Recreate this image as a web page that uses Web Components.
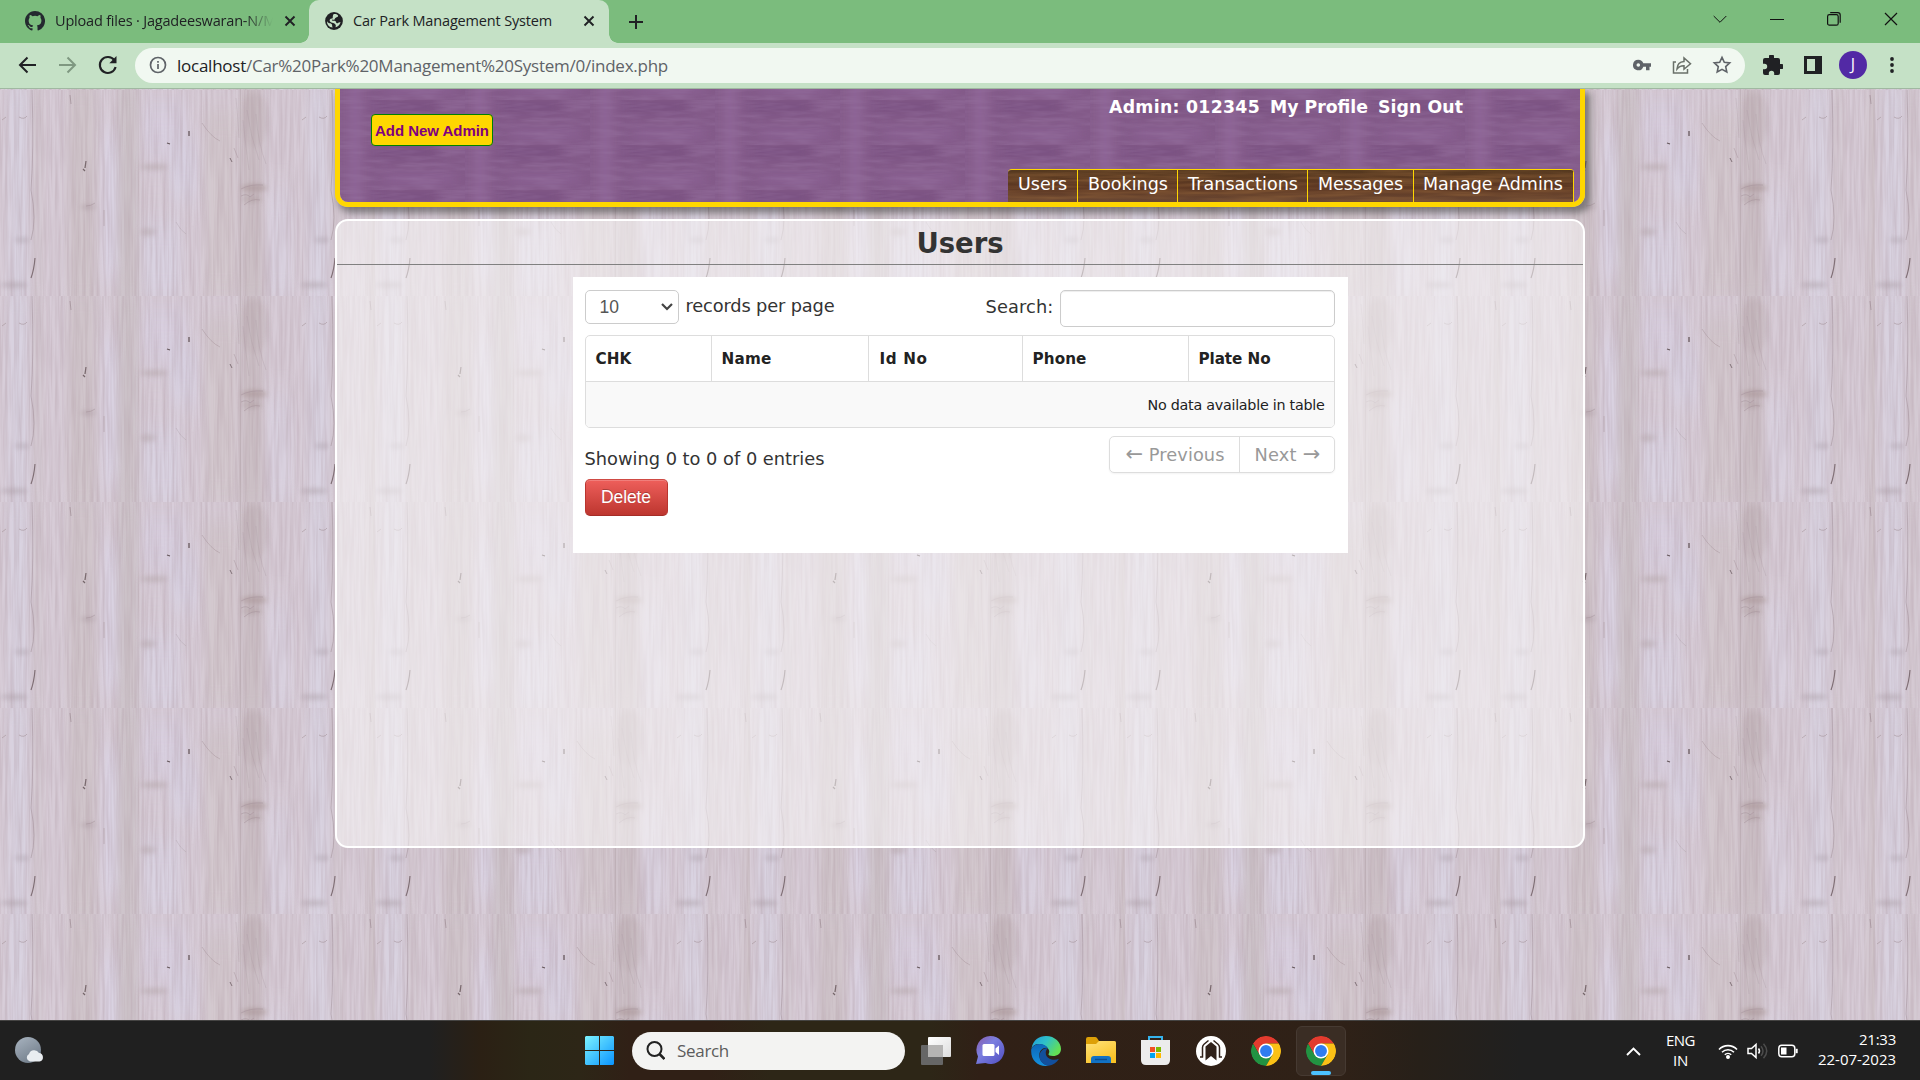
<!DOCTYPE html>
<html lang="en">
<head>
<meta charset="utf-8">
<title>Car Park Management System</title>
<style>
html,body{margin:0;height:100%;overflow:hidden}
body{font-family:"Open Sans","Noto Sans",sans-serif;font-size:14.500px;color:#202124}
</style>
</head>
<body>
<desktop-screen></desktop-screen>
<script>
const def=(name,css,html)=>{
  const t=document.createElement('template');
  t.innerHTML='<style>*{box-sizing:border-box}svg{display:block;flex:none}'+css+'</style>'+html;
  customElements.define(name,class extends HTMLElement{
    constructor(){super();this.attachShadow({mode:'open'}).append(t.content.cloneNode(true));}
  });
};

/* Textures */
def('light-wood',`:host{position:absolute;inset:0;display:block;overflow:hidden}`,`
<svg width="1920" height="932">
<defs>
<filter id="grain" x="0" y="0" width="100%" height="100%" color-interpolation-filters="sRGB"><feTurbulence type="fractalNoise" baseFrequency="0.36 0.013" numOctaves="3" seed="12"/><feColorMatrix values="0 0 0 0 .66  0 0 0 0 .57  0 0 0 0 .61  .62 0 0 0 -.2"/></filter>
<filter id="soft" x="-50%" y="-20%" width="200%" height="140%" color-interpolation-filters="sRGB"><feGaussianBlur stdDeviation="4 12"/></filter>
<filter id="b1" x="-50%" y="-50%" width="200%" height="200%" color-interpolation-filters="sRGB"><feGaussianBlur stdDeviation=".6"/></filter>
<filter id="b2" x="-50%" y="-50%" width="200%" height="200%" color-interpolation-filters="sRGB"><feGaussianBlur stdDeviation="2.500"/></filter>
<g id="plank">
<rect width="300" height="206" fill="#d7ccd7"/>
<g filter="url(#soft)">
<rect x="8" y="-10" width="20" height="230" fill="#d9d3e1"/>
<rect x="33" y="-10" width="9" height="230" fill="#d3c8d0"/>
<rect x="68" y="-10" width="28" height="230" fill="#d0c5cb"/>
<rect x="103" y="40" width="16" height="150" fill="#dad3e3"/>
<rect x="118" y="-10" width="20" height="230" fill="#ccc2c8"/>
<rect x="143" y="10" width="44" height="60" fill="#d8cfdf"/>
<rect x="143" y="130" width="38" height="80" fill="#d9d2e1"/>
<rect x="170" y="50" width="28" height="60" fill="#d7d0e0"/>
<rect x="205" y="20" width="32" height="190" fill="#d3c8ce"/>
<rect x="241" y="-10" width="22" height="230" fill="#cbbfc5"/>
<rect x="268" y="100" width="24" height="110" fill="#d9d1df"/>
</g>
<rect x="240" width="1" height="206" fill="#b8a9ad" opacity=".5"/><rect x="138" width="1" height="206" fill="#bfb2b8" opacity=".3"/>
<g filter="url(#b2)"><ellipse cx="254" cy="98" rx="13" ry="4" fill="#a89594" opacity=".6"/><ellipse cx="252" cy="109" rx="10" ry="3" fill="#a99696" opacity=".45"/><ellipse cx="254" cy="30" rx="14" ry="28" fill="#bfb0b4" opacity=".4"/><ellipse cx="14" cy="195" rx="14" ry="3" fill="#a99da5" opacity=".5"/><ellipse cx="22" cy="150" rx="8" ry="2.500" fill="#aaa0a9" opacity=".5"/><ellipse cx="154" cy="77" rx="14" ry="3" fill="#b5a8ab" opacity=".6"/><ellipse cx="88" cy="117" rx="8" ry="2" fill="#a3949a" opacity=".5"/><ellipse cx="148" cy="142" rx="8" ry="4" fill="#b5a8ab" opacity=".5"/></g>
<g filter="url(#b1)" fill="none" stroke="#a3929a">
<path d="M32 0Q34 60 31 100Q37 130 31 150" opacity=".55"/><path d="M35 168Q34 180 31 188" stroke="#7b6b71" stroke-width="1.200"/>
<path d="M2 30l4-3M19 27q5 3 8-1" opacity=".6"/>
<path d="M70 5l1 9" opacity=".8"/><path d="M86 71l-1 7M83 79l2 2" stroke="#75666a" stroke-width="1.300"/>
<path d="M86 116q5 0 9-3M104 120v16" opacity=".5"/>
<path d="M189 41v5M167 53l3 1" stroke="#5d5054" stroke-width="1.300"/><path d="M202 33q9 14 18 18M234 58l4 10" opacity=".45"/><path d="M230 68l2 4" stroke="#776a6f"/>
<path d="M176 132q4 8 10 12" opacity=".3"/>
<path d="M241 99q9-5 22-4M241 106q6-3 9 1l4-3M244 115q8-7 16-5" opacity=".5"/>
<path d="M236 8q2 20 3 40M247 20q3 25 12 50M256 24q2 30 10 50M243 30q2 20 6 50" opacity=".25"/>
</g>
</g>
<pattern id="w" x="0" y="1" width="375" height="206" patternUnits="userSpaceOnUse">
<use href="#plank"/><use href="#plank" x="300"/><rect width="375" height="206" filter="url(#grain)"/>
</pattern></defs>
<rect width="1920" height="932" fill="url(#w)"/>
</svg>`);
def('purple-wood',`:host{position:absolute;inset:0;display:block;overflow:hidden}`,`
<svg width="1240" height="113"><defs>
<filter id="g" x="0" y="0" width="100%" height="100%" color-interpolation-filters="sRGB"><feTurbulence type="fractalNoise" baseFrequency="0.03 0.22" numOctaves="3" seed="4"/><feColorMatrix values="0 0 0 0 .60  0 0 0 0 .46  0 0 0 0 .64  .9 0 0 0 -.34"/></filter>
<filter id="s" x="-30%" y="-30%" width="160%" height="160%" color-interpolation-filters="sRGB"><feGaussianBlur stdDeviation="6 4"/></filter>
<pattern id="p" x="0" y="-34" width="125" height="45" patternUnits="userSpaceOnUse"><rect width="125" height="45" fill="#835a89"/>
<g filter="url(#s)"><rect x="8" y="-15" width="14" height="75" fill="#8e6697"/><rect x="32" y="0" width="66" height="14" fill="#7b5282"/><rect x="45" y="28" width="70" height="12" fill="#896091"/></g>
<rect width="125" height="45" filter="url(#g)"/></pattern></defs><rect width="1240" height="113" fill="url(#p)"/></svg>`);
def('brown-wood',`:host{position:absolute;inset:0;display:block;overflow:hidden}`,`
<svg width="570" height="34"><defs><filter id="g" x="0" y="0" width="100%" height="100%" color-interpolation-filters="sRGB"><feTurbulence type="fractalNoise" baseFrequency="0.014 0.24" numOctaves="3" seed="9"/><feColorMatrix values="0 0 0 0 .56  0 0 0 0 .38  0 0 0 0 .22  1.2 0 0 0 -.4"/></filter>
<linearGradient id="l" x2="0" y2="1"><stop stop-color="#55391f"/><stop offset=".5" stop-color="#5e3822"/><stop offset="1" stop-color="#6b4935"/></linearGradient></defs>
<rect width="570" height="34" fill="url(#l)"/><rect width="570" height="34" filter="url(#g)"/></svg>`);

/* Browser chrome */
def('browser-tab',`:host{display:flex;align-items:center;height:43px;padding-bottom:1px}
:host([active]){background:#c5e1c6;border-radius:10px 10px 0 0}
.t{margin-left:10px;white-space:nowrap;overflow:hidden;flex:1;line-height:22px}
:host([fade]) .t{-webkit-mask:linear-gradient(90deg,#000 86%,transparent 99%);mask:linear-gradient(90deg,#000 86%,transparent 99%)}
svg{margin-left:9px}`,`<slot name="icon"></slot><div class="t"><slot></slot></div><svg width="12" height="12" stroke="#202124" stroke-width="1.900"><path d="M1.500 1.500l9 9M10.500 1.500l-9 9"/></svg>`);
def('tab-strip',`:host{display:flex;height:43px;background:#7bbc7d;align-items:center}
.a{width:309px;padding-left:25px;padding-right:13px}.b{width:300px;padding-left:16px;padding-right:14px}
.win{margin-left:auto;display:flex;align-items:center;padding:0 22px 5px 0;gap:43px}
.foot{width:9px;height:43px;background:radial-gradient(circle at 100% 0,#7bbc7d 8.500px,#c5e1c6 9px);background-position:0 34px;background-size:9px 9px;background-repeat:no-repeat}
.l{margin-left:-9px;background-image:radial-gradient(circle at 0 0,#7bbc7d 8.500px,#c5e1c6 9px)}`,`
<browser-tab class="a" fade><svg slot="icon" width="20" height="20" viewBox="0 0 16 16" fill="#24292f"><path d="M8 0C3.580 0 0 3.580 0 8c0 3.540 2.290 6.530 5.470 7.590.4.070.55-.17.55-.38v-1.490c-2.010.37-2.530-.49-2.690-.94-.09-.23-.48-.94-.82-1.130-.28-.15-.68-.52-.01-.53.63-.01 1.080.58 1.230.82.72 1.210 1.870.87 2.330.66.070-.52.28-.87.51-1.070-1.780-.2-3.640-.89-3.640-3.950 0-.87.31-1.590.82-2.150-.08-.2-.36-1.020.08-2.120 0 0 .67-.21 2.200.82a7.600 7.600 0 0 1 4 0c1.530-1.040 2.200-.82 2.200-.82.44 1.100.16 1.920.08 2.120.51.56.82 1.270.82 2.150 0 3.070-1.870 3.750-3.650 3.950.29.25.54.73.54 1.480v2.190c0 .21.15.46.55.38A8 8 0 0 0 8 0z"/></svg><fit-text w="221">Upload files · Jagadeeswaran-N/M</fit-text></browser-tab>
<span class="foot l"></span>
<browser-tab class="b" active><svg slot="icon" width="18" height="18" viewBox="0 0 18 18"><circle cx="9" cy="9" r="8.900" fill="#202124"/><path d="M2 9c1 3 4 1.500 5 3.500.4 1-.2 1.500.7 3C4 15.300 1.800 12.500 2 9zM8.500 2.200c2.200-.3 3.400.3 4.600 1.200.2 2.200-3 1.600-3.200 3.400-.2 1.500-2 1-2.800.7-1.200 1.500 1.800 1 3 1.500 1.500.6.500 2.300 2 2.300 1 0 1.500-1.500 3.500-1-1 3-3 4.600-5.200 5 1-1.800.2-3-1-3.800C8 10.600 6 11 5 9.500 4 8 5 6.500 7 6.500c1.500 0 .2-2.600 1.500-4.300z" fill="#c5e1c6"/></svg><fit-text w="199">Car Park Management System</fit-text></browser-tab>
<span class="foot"></span>
<svg width="16" height="16" stroke="#202124" stroke-width="2" style="margin-left:10px"><path d="M8 1v14M1 8h14"/></svg>
<div class="win"><svg width="14" height="14" fill="none" stroke="#111"><path d="M.7 4l6.300 6.300L13.300 4"/></svg><svg width="14" height="14" stroke="#111" shape-rendering="crispEdges"><path d="M0 7.500h14"/></svg><svg width="14" height="14" fill="none" stroke="#111" stroke-width="1.200"><rect x=".6" y="2.600" width="10.600" height="10.600" rx="1.800"/><path d="M3.200.7h7.600c1.500 0 2.400 1 2.400 2.400v7.600"/></svg><svg width="14" height="14" stroke="#111" stroke-width="1.200"><path d="M1 1l12 12M13 1L1 13"/></svg></div>`);
def('address-bar',`:host{display:flex;height:46px;background:#c5e1c6;border-bottom:1px solid #a0b8a1;align-items:center;padding:0 0 1px 18px}
.pill{width:1610px;height:35px;border-radius:18px;background:#f1f8f1;margin-left:17px;display:flex;align-items:center;padding:0 13px 0 14px;font-size:17px;color:#5f6368}
.u{margin-left:10px;flex:1;line-height:24px;padding-top:1px;white-space:nowrap}.u b{font-weight:400;color:#202124}
.av{width:28px;height:28px;border-radius:50%;background:#5229a5;color:#fff;font-size:16px;line-height:27px;text-align:center;margin-left:18px}`,`
<svg width="19" height="18" fill="none" stroke="#202124" stroke-width="2"><path d="M18 9H2.500M9.500 1.500L2 9l7.500 7.500"/></svg>
<svg width="19" height="18" fill="none" stroke="#7f9881" stroke-width="2" style="margin-left:21px"><path d="M1 9h15.500M9.500 1.500L17 9l-7.500 7.500"/></svg>
<svg width="20" height="20" viewBox="0 0 20 20" fill="none" stroke="#202124" stroke-width="2.100" style="margin-left:21px"><path d="M16.300 5.200A8 8 0 1 0 17.600 12"/><path d="M18.500 1v7.200h-7.200z" fill="#202124" stroke="none"/></svg>
<div class="pill"><svg width="18" height="18" fill="none" stroke="#5f6368" stroke-width="1.700"><circle cx="9" cy="9" r="7.500"/><path d="M9 8v5M9 5v1.800"/></svg><div class="u"><fit-text w="491"><b>localhost</b>/Car%20Park%20Management%20System/0/index.php</fit-text></div>
<svg width="18" height="12" fill="#5f6368" fill-rule="evenodd"><path d="M5.300.7a5.300 5.300 0 1 0 5 7H13v3.500h3.500V7.700H18V4.300h-7.700a5.300 5.300 0 0 0-5-3.600zm0 3.500a1.800 1.800 0 1 1 0 3.600 1.800 1.800 0 0 1 0-3.600z"/></svg>
<svg width="20" height="20" fill="none" stroke="#6a7069" stroke-width="1.500" style="margin-left:21px"><path d="M4 7H1.500v11h14v-4"/><path d="M5 14c.3-5 3-7.300 7-7.500V3l6.500 5.700-6.500 5.500v-3.500c-3-.1-5.200.8-7 3.300z"/></svg>
<svg width="20" height="20" fill="none" stroke="#5f6368" stroke-width="1.600" style="margin-left:20px"><path d="M10 2.300l2.300 5 5.400.6-4 3.700 1.100 5.400-4.800-2.700L5.200 17l1.100-5.400-4-3.700 5.400-.6z"/></svg></div>
<svg width="20" height="20" viewBox="2 2 20 20" fill="#202124" style="margin-left:18px"><path d="M20.500 11H19V7a2 2 0 0 0-2-2h-4V3.500a2.500 2.500 0 0 0-5 0V5H4a2 2 0 0 0-2 2v3.800h1.500a2.700 2.700 0 0 1 0 5.400H2V20a2 2 0 0 0 2 2h3.800v-1.500a2.700 2.700 0 0 1 5.400 0V22H17a2 2 0 0 0 2-2v-4h1.500a2.500 2.500 0 0 0 0-5z"/></svg>
<svg width="18" height="18" style="margin-left:21px"><path d="M0 0h18v18H0zM3 3v12h8V3z" fill="#202124" fill-rule="evenodd"/></svg>
<div class="av" style="margin-left:17px">J</div>
<svg width="4" height="18" fill="#202124" style="margin-left:23px"><circle cx="2" cy="3" r="1.900"/><circle cx="2" cy="9" r="1.900"/><circle cx="2" cy="15" r="1.900"/></svg>`);

/* Web page */
def('site-nav',`:host{display:flex;position:relative;height:33px;width:566px;border-radius:4px 4px 0 0;overflow:hidden;border-top:1px solid gold;color:#fff;font-size:17.500px;line-height:29px}
span{position:relative;display:block;height:32px;border-right:1px solid gold;padding-left:10px;white-space:nowrap}`,`
<brown-wood></brown-wood><span style="width:70px"><fit-text w="49">Users</fit-text></span><span style="width:100px"><fit-text w="80">Bookings</fit-text></span><span style="width:130px"><fit-text w="110">Transactions</fit-text></span><span style="width:106px"><fit-text w="85">Messages</fit-text></span><span style="width:160px;padding-left:9px"><fit-text w="140">Manage Admins</fit-text></span>`);
def('site-header',`:host{display:flex;position:relative;width:1250px;height:118px;border:5px solid gold;border-top:0;border-radius:0 0 13px 13px;box-shadow:4px 5px 7px 1px rgba(70,70,70,.6);font-family:"DejaVu Sans",Verdana,sans-serif}
purple-wood{border-radius:0 0 8px 8px}
button{position:relative;margin:25px 0 0 31px;width:122px;height:32px;padding:0;background:gold;border:1px solid green;border-radius:4px;color:purple;font:bold 15px "Liberation Sans",Arial,sans-serif;flex:none;display:flex;align-items:center;justify-content:center}
.r{position:relative;flex:1;display:flex;flex-direction:column;align-items:flex-end;padding-right:6px;justify-content:space-between}
.who{display:flex;gap:10px;padding:8px 111px 0 0;color:#fff;font-weight:bold;font-size:17.300px;line-height:20px;white-space:nowrap}`,`
<purple-wood></purple-wood><button><fit-text w="114">Add New Admin</fit-text></button>
<div class="r"><div class="who"><fit-text w="151">Admin: 012345</fit-text><fit-text w="98">My Profile</fit-text><fit-text w="85">Sign Out</fit-text></div><site-nav></site-nav></div>`);
def('users-table',`:host{display:block;width:750px;height:93px;border:1px solid #ddd;border-radius:5px;overflow:hidden;background:#fff;color:#222}
.h{display:flex;height:45px;font-weight:bold;font-size:15.200px;line-height:46px}
.h span{padding-left:10px;border-left:1px solid #ddd}.h span:first-child{border:0}
.e{height:46px;background:#f9f9f9;border-top:1px solid #ddd;text-align:right;padding-right:9px;font-size:14.300px;line-height:47px}`,`
<div class="h"><span style="width:125px"><fit-text w="36">CHK</fit-text></span><span style="width:157px"><fit-text w="50">Name</fit-text></span><span style="width:154px;"><fit-text w="48" style="margin-left:1px">Id No</fit-text></span><span style="width:166px"><fit-text w="54">Phone</fit-text></span><span style="width:146px"><fit-text w="72">Plate No</fit-text></span></div>
<div class="e"><fit-text w="177">No data available in table</fit-text></div>`);
def('users-card',`:host{display:block;width:775px;height:276px;background:#fff;padding:13px 13px 0 12px;font-size:17.800px;line-height:26px}
.row{display:flex;align-items:flex-start}
.sel{width:94px;height:34px;border:1px solid #ccc;border-radius:5px;display:flex;align-items:center;justify-content:space-between;padding:0 5px 0 14px;color:#555;font:17.500px "Liberation Sans",Arial,sans-serif;background:#fff}
.in{width:275px;height:37px;border:1px solid #ccc;border-radius:5px;box-shadow:inset 0 1px 1px rgba(0,0,0,.075);margin-left:6px}
.pg{display:flex;width:226px;height:37px;border:1px solid #ddd;border-radius:5px;box-shadow:0 1px 2px rgba(0,0,0,.05);color:#999;line-height:36px}
.pg span{padding-left:16px}.pg span+span{border-left:1px solid #ddd;padding-left:15px}
.pg b{font-weight:400;font-size:21px;line-height:20px}
.del{width:83px;height:37px;border:1px solid #bd362f;border-color:#cf4a44 #b9352f #a52d27;border-radius:5px;background:linear-gradient(#ee5f5b,#bd362f);box-shadow:inset 0 1px 0 rgba(255,255,255,.2);color:#fff;font:17.500px/35px "Liberation Sans",Arial,sans-serif;text-align:center;text-shadow:0 -1px 0 rgba(0,0,0,.25);margin-top:6px}`,`
<div class="row" style="height:45px"><div class="sel">10<svg width="12" height="8" fill="none" stroke="#444" stroke-width="2.200"><path d="M1 1l5 5 5-5"/></svg></div><span style="margin:3px 0 0 7px"><fit-text w="149">records per page</fit-text></span>
<span style="margin:4px 0 0 auto"><fit-text w="68">Search:</fit-text></span><div class="in"></div></div>
<users-table></users-table>
<div class="row" style="margin-top:8px;justify-content:space-between"><span style="margin-top:10px"><fit-text w="240">Showing 0 to 0 of 0 entries</fit-text></span><div class="pg"><span style="width:129px"><fit-text w="99"><b>←</b> Previous</fit-text></span><span><fit-text w="66">Next <b>→</b></fit-text></span></div></div>
<div class="del"><fit-text w="50">Delete</fit-text></div>`);
def('users-panel',`:host{display:flex;flex-direction:column;align-items:center;position:relative;width:1250px;height:629px;margin-top:12px;border:2px solid #fff;border-radius:13px;background:rgba(249,247,248,.56);font-family:"DejaVu Sans",Verdana,sans-serif;color:#333}
h1{margin:0;width:100%;height:44px;border-bottom:1px solid #808080;font-size:27.500px;line-height:45px;text-align:center}
users-card{margin-top:12px;flex:none}`,`<h1><fit-text w="87">Users</fit-text></h1><users-card></users-card>`);
def('web-page',`:host{position:relative;display:flex;flex-direction:column;align-items:center;height:931px;overflow:hidden;background:#d3c9d3}`,
`<light-wood></light-wood><site-header></site-header><users-panel></users-panel>`);

/* Taskbar */
def('chrome-icon',`:host{display:block;width:30px;height:30px}`,`<svg width="30" height="30" viewBox="0 0 48 48"><defs><clipPath id="c"><circle cx="24" cy="24" r="24"/></clipPath></defs><g clip-path="url(#c)"><path d="M3.200 12A24 24 0 0 1 44.800 12H24L13.600 30z" fill="#e33b2e"/><path d="M3.200 12A24 24 0 0 0 24 48L34.400 30H13.600z" fill="#229342"/><path d="M24 48A24 24 0 0 0 44.800 12H24L34.400 30z" fill="#fbc116"/></g><circle cx="24" cy="24" r="12" fill="#fff"/><circle cx="24" cy="24" r="9.500" fill="#2f7cf0"/></svg>`);
def('search-pill',`:host{display:flex;align-items:center;width:273px;height:38px;border-radius:19px;background:#f3f3f2;color:#5c5c5c;font-size:17px;padding-left:14px;gap:12px;line-height:24px}`,
`<svg width="19" height="19" fill="none" stroke="#222" stroke-width="2"><circle cx="8.500" cy="8" r="7"/><path d="M13.500 13l5 5" stroke-width="2.600"/></svg><fit-text w="52">Search</fit-text>`);
def('system-tray',`:host{display:flex;align-items:center;color:#fff;font-size:15px;line-height:20px;height:60px;padding-right:24px}
div{text-align:center;padding-bottom:4px}.d{text-align:right;margin-left:20px}fit-text{display:block}`,`
<svg width="15" height="9" fill="none" stroke="#fff" stroke-width="1.900"><path d="M1 8l6.500-6.500L14 8"/></svg>
<div style="width:29px;margin:1px 0 0 25px"><fit-text w="29">ENG</fit-text><fit-text w="15" style="margin:0 auto">IN</fit-text></div>
<svg width="20" height="16" viewBox="0 0 20 16" fill="none" stroke="#fff" stroke-width="1.600" style="margin-left:23px"><path d="M1 6.500a12.500 12.500 0 0 1 18 0M4 9.300a8.500 8.500 0 0 1 12 0M6.800 11.800a4.600 4.600 0 0 1 6.400 0"/><circle cx="10" cy="14" r="1.200" fill="#fff"/></svg>
<svg width="21" height="18" viewBox="0 0 21 18" fill="none" stroke="#fff" stroke-width="1.500" style="margin-left:9px;margin-right:1px"><path d="M1 6.500v5h3.500L9 15.500v-13L4.500 6.500z"/><path d="M11.500 6.500q2 2.500 0 5"/><path d="M14 4.200q4 4.800 0 9.600M16.500 1.700q6.500 7.300 0 14.600" stroke="#4c4c4c"/></svg>
<svg width="20" height="14" style="margin-left:9px"><rect x=".8" y="1.300" width="16" height="11.400" rx="3" fill="none" stroke="#fff" stroke-width="1.500"/><rect x="3" y="3.500" width="5.500" height="7" fill="#fff"/><path d="M18.700 4.800v4.400" stroke="#fff" stroke-width="2"/></svg>
<div class="d" style="width:78px"><fit-text w="37" style="margin-left:auto">21:33</fit-text><fit-text w="78">22-07-2023</fit-text></div>`);
def('task-bar',`:host{display:flex;height:60px;border-top:1px solid #454443;justify-content:space-between;background:linear-gradient(90deg,#202020 430px,#2b2014 480px,#2b2616 530px,#2d2617 580px,#302016 630px,#302016 710px,#2d2617 770px,#2d2617 930px,#302016 980px,#2f2117 1340px,#272019 1420px,#202020 1520px)}
.w{width:585px;padding:15px 0 0 15px}.mid{display:flex;align-items:center;flex:1;height:59px}
.on{width:50px;height:50px;border:1px solid #463a32;background:#3a2d24;border-radius:6px;margin-left:15px;display:flex;flex-direction:column;align-items:center;padding-top:9px;gap:5px}
.on i{width:20px;height:4px;border-radius:2px;background:#4cc2ff}`,`
<div class="w"><svg width="29" height="28"><defs><linearGradient id="m" x2=".6" y2="1"><stop stop-color="#a9b4c0"/><stop offset="1" stop-color="#737f8c"/></linearGradient></defs><circle cx="13" cy="14" r="13" fill="url(#m)"/><path d="M15 25.500a4 4 0 0 1-1-7.500 5.500 5.500 0 0 1 10-1 4.300 4.300 0 0 1 .5 8.500z" fill="#e9edf0"/></svg></div>
<div class="mid">
<svg width="29" height="29"><defs><linearGradient id="a" x2="1" y2="1"><stop stop-color="#7cf3ff"/><stop offset="1" stop-color="#0a94ff"/></linearGradient></defs><path d="M1 0h13v14H0V1zM15 0h13l1 1v13H15zM0 15h14v14H1l-1-1zM15 15h14v13l-1 1H15z" fill="url(#a)"/></svg>
<search-pill style="margin-left:18px"></search-pill>
<svg width="30" height="28" style="margin-left:16px"><defs><linearGradient id="b" x2="1" y2="1"><stop stop-color="#fff"/><stop offset="1" stop-color="#ddd"/></linearGradient></defs><rect x="7" width="23" height="20" rx="1" fill="url(#b)"/><rect y="8" width="22" height="20" rx="1" fill="#666"/><path d="M7 8h15v12H7z" fill="#b5b4b3"/></svg>
<svg width="29" height="29" style="margin-left:25px"><defs><linearGradient id="d" x1="0" x2="1" y2="1"><stop stop-color="#8a5aa8"/><stop offset=".4" stop-color="#7b7fe0"/><stop offset="1" stop-color="#4f4cc0"/></linearGradient></defs><path d="M14.500 0a14 14 0 1 1-5 27.100L0 28l2-7.500A14 14 0 0 1 14.500 0z" fill="url(#d)"/><rect x="6.500" y="8" width="12" height="12" rx="1.500" fill="#fff"/><path d="M19.500 12.500L23 9.500v9.500l-3.500-3z" fill="#fff"/></svg>
<svg width="30" height="30" viewBox="0 0 30 30" style="margin-left:26px"><defs><linearGradient id="e" x2="1" y2=".5"><stop stop-color="#1f9be0"/><stop offset=".5" stop-color="#2fc1c8"/><stop offset="1" stop-color="#63df55"/></linearGradient><linearGradient id="f" x2="0" y2="1"><stop stop-color="#0c66b8"/><stop offset="1" stop-color="#1491de"/></linearGradient></defs><path d="M.5 12.500C2 4 8 0 15 0c9 0 15 6.500 15 13 0 4.500-3.500 7-8 7-3 0-5-1-4.500-2 1-1.500 1-3 .3-4.300C16 10.500 12 8 8 8S1.500 10 .5 12.500z" fill="url(#e)"/><path d="M.3 13C2 9.500 5 8 8.500 8c4.500 0 7 2 8.500 4-6-1-9.500 4-8.500 9 .9 4.500 4.500 8 9 8.700C8 31.500-1 24.500.3 13z" fill="url(#f)"/><path d="M17 12c-5 0-9 4-8.500 9 .5 4.500 4.500 8.500 9 8.700 4.500-.5 8-3 10.500-7-5 2.500-11.500.5-13-4-.7-2.500 0-5 2-6.700z" fill="#124f9c"/></svg>
<svg width="30" height="27" style="margin-left:25px"><defs><linearGradient id="h" x2=".6" y2="1"><stop stop-color="#ffe27a"/><stop offset="1" stop-color="#f9c225"/></linearGradient></defs><path d="M0 2q0-2 2-2h7q1.500 0 2 1l2 3h15q2 0 2 2v5H0z" fill="#dda008"/><path d="M0 7h10l3-3h15q2 0 2 2v20H0z" fill="url(#h)"/><path d="M5 26v-4q0-3 3-3h14q3 0 3 3v4z" fill="#1272c4"/><path d="M9 22.500h12" stroke="#0a4d90" stroke-width="1.400"/></svg>
<svg width="29" height="29" style="margin-left:25px"><path d="M8 6V1h13v5" fill="none" stroke="#35b3ec" stroke-width="2"/><path d="M0 4h29v20q0 5-5 5H5q-5 0-5-5z" fill="#ececec"/><path d="M9 11h5v5H9z" fill="#f25022"/><path d="M15 11h5v5h-5z" fill="#7fba00"/><path d="M9 17h5v5H9z" fill="#00a4ef"/><path d="M15 17h5v5h-5z" fill="#ffb900"/></svg>
<svg width="30" height="30" style="margin-left:26px"><circle cx="15" cy="15" r="15" fill="#fff"/><path d="M9.500 24.500V10.500L15 6l5.500 4.500v14L15 20z" fill="#30221a"/><path d="M6.500 21V11.500q0-2 1.500-3.300L12.500 4.500M23.500 21V11.500q0-2-1.500-3.300L17.500 4.500M4 21h3.200M26 21h-3.200" fill="none" stroke="#30221a" stroke-width="1.500"/></svg>
<chrome-icon style="margin-left:25px"></chrome-icon>
<div class="on"><chrome-icon></chrome-icon><i></i></div>
</div><system-tray></system-tray>`);
def('desktop-screen',`:host{display:flex;flex-direction:column;width:1920px;height:1080px;overflow:hidden}`,
`<tab-strip></tab-strip><address-bar></address-bar><web-page></web-page><task-bar></task-bar>`);

/* Spreads its text evenly over the width given in the w attribute. */
customElements.define('fit-text',class extends HTMLElement{
  constructor(){super();this.attachShadow({mode:'open'}).innerHTML='<style>:host{display:inline-block;white-space:nowrap;text-align:left}span{display:inline-block}</style><span><slot></slot></span>';}
  connectedCallback(){
    const s=this.shadowRoot.querySelector('span'),w=+this.getAttribute('w'),n=this.textContent.length;
    this.style.width=w+'px';
    s.style.letterSpacing=((w-s.getBoundingClientRect().width)/n).toFixed(3)+'px';
  }
});
</script>
</body>
</html>
